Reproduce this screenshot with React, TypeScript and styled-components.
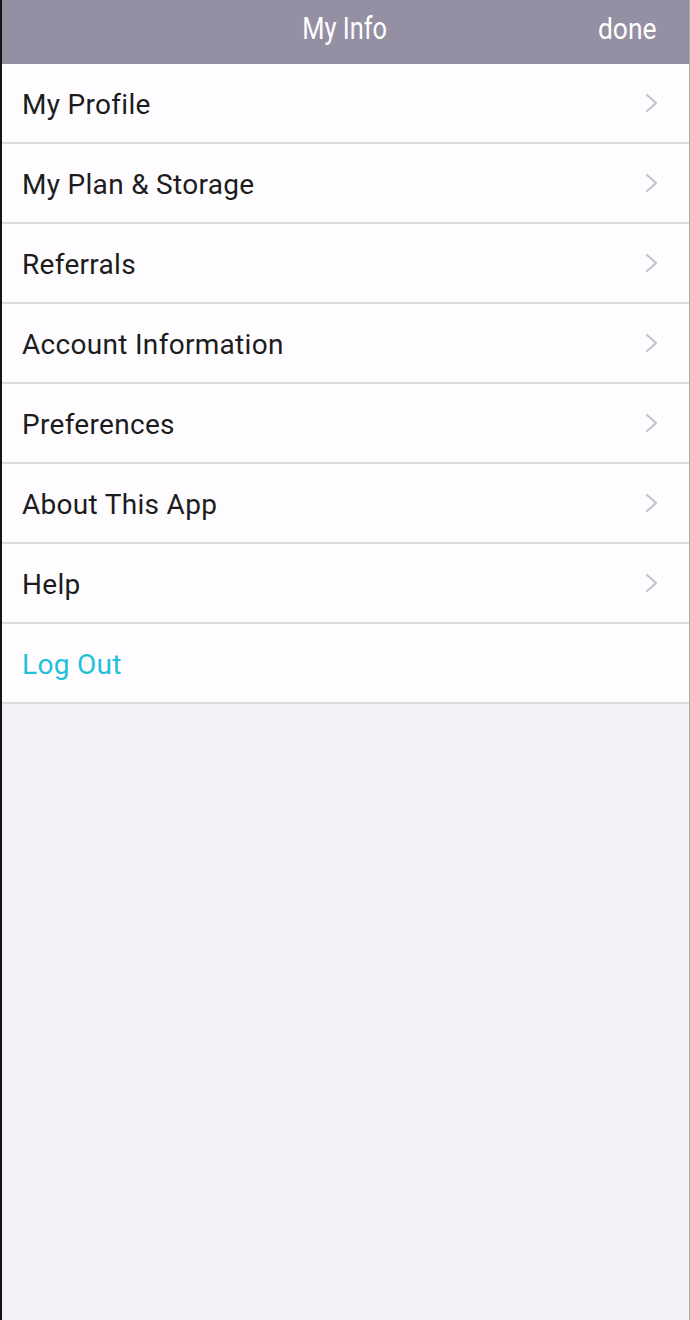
import React from 'react';
import styled, { createGlobalStyle } from 'styled-components';

const GlobalStyle = createGlobalStyle`
  html, body {
    margin: 0;
    padding: 0;
    background: #f2f2f7;
  }
  body {
    font-family: Roboto, "Noto Sans", sans-serif;
  }
`;

const Screen = styled.div`
  width: 690px;
  height: 1320px;
  box-sizing: border-box;
  border-left: 2px solid #141414;
  border-right: 1px solid #a9a9ad;
  background: #f2f2f7;
  display: flex;
  flex-direction: column;
  overflow: hidden;
`;

const Header = styled.header`
  height: 64px;
  flex-shrink: 0;
  background: #958fa3;
  display: grid;
  grid-template-columns: 1fr auto 1fr;
  align-items: center;
  padding: 0 32px 8px 20px;
  box-sizing: border-box;
  color: #fff;
`;

const Title = styled.h1`
  grid-column: 2;
  margin: 0 0 0 10px;
  font-weight: 400;
  font-size: 31px;
  transform: scaleX(0.82);
`;

const Done = styled.button`
  grid-column: 3;
  justify-self: end;
  background: none;
  border: 0;
  padding: 0;
  color: #fff;
  font-family: inherit;
  font-size: 30px;
  transform: scaleX(0.88);
  transform-origin: right center;
`;

const List = styled.ul`
  list-style: none;
  margin: 0;
  padding: 0;
  background: #fefcfe;
`;

const Row = styled.li<{ $accent?: boolean }>`
  height: 78px;
  border-bottom: 2px solid #dcdcdf;
  display: flex;
  align-items: center;
  justify-content: space-between;
  padding: 0 30px 0 20px;
  font-size: 28px;
  letter-spacing: 0.3px;
  color: ${(p) => (p.$accent ? '#1ec0dc' : '#1c1c1e')};
`;

const Label = styled.span<{ $shift?: number }>`
  transform: translateY(${(p) => p.$shift ?? 1}px);
`;

const Chevron = () => (
  <svg width="14" height="20" viewBox="0 0 14 20" fill="none">
    <path d="M2 2l9 8-9 8" stroke="#c4c4c9" strokeWidth="2.2" strokeLinecap="round" strokeLinejoin="round" />
  </svg>
);

const items = [
  'My Profile',
  'My Plan & Storage',
  'Referrals',
  'Account Information',
  'Preferences',
  'About This App',
  'Help',
];

export default function App() {
  return (
    <>
      <GlobalStyle />
      <Screen>
        <Header>
          <Title>My Info</Title>
          <Done>done</Done>
        </Header>
        <List>
          {items.map((label) => (
            <Row key={label}>
              <Label>{label}</Label>
              <Chevron />
            </Row>
          ))}
          <Row $accent>
            <Label $shift={1}>Log Out</Label>
          </Row>
        </List>
      </Screen>
    </>
  );
}
